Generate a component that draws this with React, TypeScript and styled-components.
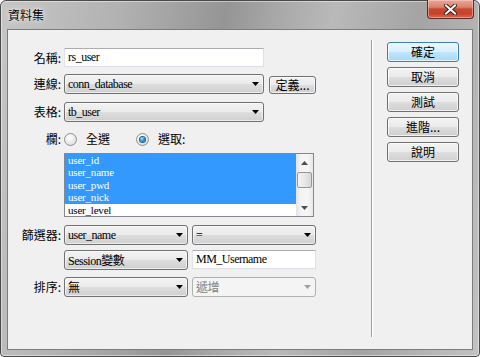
import { FC, ReactNode } from 'react';
import styled, { createGlobalStyle, css } from 'styled-components';

const GlobalStyle = createGlobalStyle`
  html, body {
    margin: 0;
    padding: 0;
    background: #ffffff;
  }
  * {
    box-sizing: border-box;
  }
`;

const cjk = `'Noto Sans CJK TC', 'Noto Sans CJK SC', sans-serif`;
const serif = `'Liberation Serif', 'Noto Sans CJK TC', serif`;

const Window = styled.div`
  width: 480px;
  height: 357px;
  border: 1px solid #4a4a4a;
  border-radius: 6px 6px 4px 4px;
  padding: 0 6px 6px 6px;
  display: flex;
  flex-direction: column;
  background: linear-gradient(
    100deg,
    #c6c6c6 0%,
    #b2b2b2 22%,
    #959595 42%,
    #a9a9a9 52%,
    #b9b9b9 62%,
    #a4a4a4 78%,
    #c2c2c2 100%
  );
  box-shadow: inset 0 0 0 1px rgba(255, 255, 255, 0.45);
  font-family: ${cjk};
  font-size: 12px;
  color: #000;
`;

const TitleBar = styled.div`
  height: 28px;
  display: flex;
  align-items: flex-start;
  justify-content: space-between;
`;

const Title = styled.div`
  padding: 6px 0 0 1px;
  font-size: 12px;
  line-height: 16px;
  text-shadow: 0 0 6px rgba(255, 255, 255, 0.9), 0 0 2px rgba(255, 255, 255, 0.9);
`;

const CloseButton = styled.div`
  width: 47px;
  height: 19px;
  margin-right: -1px;
  margin-top: -1px;
  border: 1px solid #5b2d26;
  border-top: none;
  border-radius: 0 0 4px 4px;
  background: linear-gradient(
    #e9a897 0%,
    #d9826c 40%,
    #c64a32 50%,
    #c9402a 75%,
    #d8684e 100%
  );
  box-shadow: inset 0 0 0 1px rgba(255, 220, 210, 0.45);
  display: flex;
  align-items: center;
  justify-content: center;
`;

const Client = styled.div`
  flex: 1;
  border: 1px solid #7c7c7c;
  background: #f0f0f0;
  display: flex;
`;

const Form = styled.div`
  width: 363px;
  padding-top: 18px;
  display: flex;
  flex-direction: column;
`;

const Row = styled.div<{ $h: number; $center?: boolean }>`
  height: ${(p) => p.$h}px;
  display: flex;
  align-items: flex-start;
  gap: 4px;
  ${(p) =>
    p.$center &&
    css`
      align-items: center;
      height: 16px;
      margin-bottom: ${p.$h - 16}px;
    `}
`;

const Label = styled.div<{ $lh?: number }>`
  width: 56px;
  margin-right: -4px;
  padding-right: 3px;
  text-align: right;
  line-height: ${(p) => p.$lh ?? 20}px;
  white-space: nowrap;
`;

const TextBox = styled.div<{ $w: number }>`
  width: ${(p) => p.$w}px;
  height: 19px;
  background: #fff;
  border: 1px solid #dbdfe6;
  border-top-color: #abadb3;
  border-left-color: #e2e3ea;
  padding-left: 3px;
  font-family: ${serif};
  font-size: 12px;
  letter-spacing: -0.5px;
  line-height: 17px;
`;

const ComboBox = styled.div<{ $w: number; $disabled?: boolean }>`
  width: ${(p) => p.$w}px;
  height: 20px;
  border: 1px solid #707070;
  border-radius: 3px;
  background: linear-gradient(#f2f2f2 0%, #ebebeb 48%, #dddddd 52%, #cfcfcf 100%);
  box-shadow: inset 0 0 0 1px rgba(255, 255, 255, 0.6);
  display: flex;
  align-items: center;
  justify-content: space-between;
  padding: 0 4px 0 3px;
  font-family: ${serif};
  font-size: 12px;
  letter-spacing: -0.5px;
  color: #000;
  ${(p) =>
    p.$disabled &&
    css`
      border-color: #adb2b5;
      background: #f4f4f4;
      box-shadow: none;
      color: #838383;
    `}
`;

const Arrow: FC<{ color?: string }> = ({ color = '#000' }) => (
  <svg width="7" height="4" viewBox="0 0 7 4">
    <polygon points="0,0 7,0 3.5,4" fill={color} />
  </svg>
);

const Combo: FC<{ w: number; disabled?: boolean; children: ReactNode }> = ({
  w,
  disabled,
  children,
}) => (
  <ComboBox $w={w} $disabled={disabled}>
    <span>{children}</span>
    <Arrow color={disabled ? '#a0a0a0' : '#000'} />
  </ComboBox>
);

const PushButton = styled.div<{ $default?: boolean; $w?: number; $h?: number }>`
  width: ${(p) => p.$w ?? 72}px;
  height: ${(p) => p.$h ?? 20}px;
  border: 1px solid #707070;
  border-radius: 3px;
  background: linear-gradient(#f2f2f2 0%, #ebebeb 48%, #dddddd 52%, #cfcfcf 100%);
  box-shadow: inset 0 0 0 1px rgba(255, 255, 255, 0.7);
  display: flex;
  align-items: center;
  justify-content: center;
  font-size: 12px;
  line-height: 16px;
  ${(p) =>
    p.$default &&
    css`
      border-color: #3c7fb1;
      background: linear-gradient(#eaf6fd 0%, #d9f0fc 48%, #bee6fd 52%, #a7d9f5 100%);
    `}
`;

const RadioItem = styled.div<{ $gap: number }>`
  display: flex;
  align-items: center;
  gap: 9px;
  margin-right: ${(p) => p.$gap}px;
  line-height: 16px;
`;

const RadioCircle = styled.div<{ $checked?: boolean }>`
  width: 13px;
  height: 13px;
  border-radius: 50%;
  border: 1px solid #8e8f8f;
  background: radial-gradient(circle at 40% 35%, #ffffff 0%, #e6e6e6 60%, #c8c8c8 100%);
  display: flex;
  align-items: center;
  justify-content: center;
  &::after {
    content: '';
    display: ${(p) => (p.$checked ? 'block' : 'none')};
    width: 5px;
    height: 5px;
    border-radius: 50%;
    background: radial-gradient(circle at 40% 35%, #9fe4ff 0%, #1b8bd4 55%, #0d4f8a 100%);
    box-shadow: 0 0 0 1px #2a5c86;
  }
`;

const ListBox = styled.div`
  width: 250px;
  height: 64px;
  border: 1px solid #828790;
  background: #fff;
  display: flex;
`;

const ListItems = styled.div`
  flex: 1;
  overflow: hidden;
`;

const ListItem = styled.div<{ $selected?: boolean }>`
  height: 12.4px;
  padding-left: 3px;
  font-family: ${serif};
  font-size: 11px;
  letter-spacing: -0.2px;
  line-height: 12.4px;
  background: ${(p) => (p.$selected ? '#3399ff' : '#fff')};
  color: ${(p) => (p.$selected ? '#fff' : '#000')};
`;

const ScrollBar = styled.div`
  width: 17px;
  background: linear-gradient(90deg, #e3e3e3 0%, #f5f5f5 30%, #f5f5f5 70%, #e8e8e8 100%);
  display: flex;
  flex-direction: column;
  align-items: center;
`;

const ScrollArrow = styled.div`
  height: 17px;
  display: flex;
  align-items: center;
  justify-content: center;
`;

const Thumb = styled.div`
  width: 15px;
  height: 16px;
  margin-top: 1px;
  border: 1px solid #979797;
  border-radius: 2px;
  background: linear-gradient(90deg, #f3f3f3 0%, #e8e8e8 50%, #d6d6d6 100%);
`;

const Spacer = styled.div`
  flex: 1;
`;

const Separator = styled.div`
  width: 2px;
  margin: 10px 0 12px;
  border-left: 1px solid #a0a0a0;
  border-right: 1px solid #ffffff;
`;

const ButtonColumn = styled.div`
  padding: 12px 0 0 14px;
  display: flex;
  flex-direction: column;
  gap: 5px;
`;

const CloseGlyph = () => (
  <svg width="13" height="11" viewBox="0 0 13 11">
    <path
      d="M2 1.5 L11 9.5 M11 1.5 L2 9.5"
      stroke="#4a1c14"
      strokeWidth="4"
      strokeLinecap="square"
    />
    <path
      d="M2 1.5 L11 9.5 M11 1.5 L2 9.5"
      stroke="#ffffff"
      strokeWidth="2"
      strokeLinecap="square"
    />
  </svg>
);

const fields = ['user_id', 'user_name', 'user_pwd', 'user_nick', 'user_level'];
const selected = ['user_id', 'user_name', 'user_pwd', 'user_nick'];

export default function App() {
  return (
    <>
      <GlobalStyle />
      <Window>
        <TitleBar>
          <Title>資料集</Title>
          <CloseButton>
            <CloseGlyph />
          </CloseButton>
        </TitleBar>
        <Client>
          <Form>
            <Row $h={26}>
              <Label $lh={19}>名稱:</Label>
              <TextBox $w={200}>rs_user</TextBox>
            </Row>
            <Row $h={28}>
              <Label>連線:</Label>
              <Combo w={200}>conn_database</Combo>
              <PushButton $w={47} $h={18} style={{ marginTop: 2, marginLeft: 1 }}>
                定義...
              </PushButton>
            </Row>
            <Row $h={29}>
              <Label>表格:</Label>
              <Combo w={200}>tb_user</Combo>
            </Row>
            <Row $h={22} $center>
              <Label $lh={16}>欄:</Label>
              <RadioItem $gap={22}>
                <RadioCircle />
                全選
              </RadioItem>
              <RadioItem $gap={0}>
                <RadioCircle $checked />
                選取:
              </RadioItem>
            </Row>
            <Row $h={72}>
              <Label />
              <ListBox>
                <ListItems>
                  {fields.map((f) => (
                    <ListItem key={f} $selected={selected.includes(f)}>
                      {f}
                    </ListItem>
                  ))}
                </ListItems>
                <ScrollBar>
                  <ScrollArrow>
                    <svg width="7" height="4" viewBox="0 0 7 4">
                      <polygon points="0,4 7,4 3.5,0" fill="#4d4d4d" />
                    </svg>
                  </ScrollArrow>
                  <Thumb />
                  <Spacer />
                  <ScrollArrow>
                    <Arrow color="#4d4d4d" />
                  </ScrollArrow>
                </ScrollBar>
              </ListBox>
            </Row>
            <Row $h={25}>
              <Label>篩選器:</Label>
              <Combo w={124}>user_name</Combo>
              <Combo w={124}>=</Combo>
            </Row>
            <Row $h={27}>
              <Label />
              <Combo w={124}>Session變數</Combo>
              <TextBox $w={124}>MM_Username</TextBox>
            </Row>
            <Row $h={20}>
              <Label>排序:</Label>
              <Combo w={124}>無</Combo>
              <Combo w={124} disabled>
                遞增
              </Combo>
            </Row>
          </Form>
          <Separator />
          <ButtonColumn>
            <PushButton $default>確定</PushButton>
            <PushButton>取消</PushButton>
            <PushButton>測試</PushButton>
            <PushButton>進階...</PushButton>
            <PushButton>說明</PushButton>
          </ButtonColumn>
        </Client>
      </Window>
    </>
  );
}
